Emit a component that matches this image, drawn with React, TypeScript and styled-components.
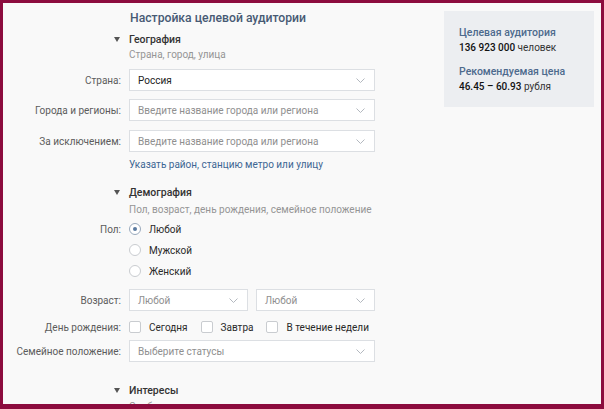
import React from "react";
import styled, { createGlobalStyle } from "styled-components";

const Global = createGlobalStyle`
  html, body { margin: 0; padding: 0; }
  body { font-family: Roboto, "Noto Sans", Arial, sans-serif; background: #8c0c3e; }
  * { box-sizing: border-box; }
`;

const Frame = styled.div`
  width: 604px;
  height: 409px;
  border: 3px solid #8c0c3e;
  border-bottom-width: 5px;
  background: #f9f9f9;
  overflow: hidden;
  display: flex;
  align-items: flex-start;
`;

const Form = styled.div`
  width: 372px;
  display: flex;
  flex-direction: column;
`;

const Title = styled.div`
  padding: 8px 0 0 127px;
  height: 28px;
  font-size: 12.2px;
  line-height: 15px;
  font-weight: 500;
  color: #475a74;
`;

const Row = styled.div<{ $h: number; $mt?: number }>`
  display: grid;
  grid-template-columns: 118px 246px;
  column-gap: 8px;
  align-items: center;
  height: ${(p) => p.$h}px;
  margin-top: ${(p) => p.$mt ?? 0}px;
  white-space: nowrap;
`;

const Label = styled.div`
  text-align: right;
  font-size: 10px;
  color: #5c5c5c;
`;

const Arrow = styled.div`
  display: flex;
  justify-content: flex-end;
  padding-right: 1px;
`;

const SectionTitle = styled.div`
  font-size: 10.5px;
  font-weight: 500;
  color: #333;
`;

const Hint = styled.div`
  font-size: 10px;
  color: #959595;
`;

const LinkText = styled.div`
  font-size: 10px;
  color: #3d6693;
`;

const Box = styled.div<{ $muted?: boolean }>`
  height: 22px;
  background: #fff;
  border: 1px solid #dcdfe3;
  display: flex;
  align-items: center;
  justify-content: space-between;
  padding: 0 9px 0 8px;
  font-size: 10px;
  color: ${(p) => (p.$muted ? "#8f8f8f" : "#222")};
`;

const Pair = styled.div`
  display: grid;
  grid-template-columns: 1fr 1fr;
  column-gap: 8px;
`;

const Choice = styled.div`
  display: flex;
  align-items: center;
  gap: 8px;
  font-size: 10px;
  color: #2a2a2a;
`;

const Radio = styled.span<{ $on?: boolean }>`
  width: 12px;
  height: 12px;
  border-radius: 50%;
  border: 1px solid ${(p) => (p.$on ? "#9aaabd" : "#c9ccd0")};
  background: #fff;
  display: inline-flex;
  align-items: center;
  justify-content: center;
  &::after {
    content: "";
    width: 4px;
    height: 4px;
    border-radius: 50%;
    background: ${(p) => (p.$on ? "#5a7aa0" : "transparent")};
  }
`;

const Checks = styled.div`
  display: flex;
  align-items: center;
  gap: 13px;
`;

const Check = styled.span`
  width: 12px;
  height: 12px;
  border: 1px solid #c9ccd0;
  background: #fff;
  border-radius: 2px;
  display: inline-block;
`;

const Panel = styled.div`
  margin: 8px 0 0 69px;
  width: 150px;
  height: 96px;
  background: #eceef1;
  padding: 14px 0 0 15px;
  display: flex;
  flex-direction: column;
`;

const PanelTitle = styled.div`
  font-size: 10.5px;
  font-weight: 500;
  color: #4d6a8d;
  line-height: 15px;
  height: 15px;
`;

const PanelValue = styled.div`
  font-size: 10px;
  color: #333;
  line-height: 14px;
  height: 14px;
  margin: 1px 0 9px;
  b { font-weight: 500; color: #111; }
`;

const Chevron = () => (
  <svg width="9" height="5" viewBox="0 0 9 5">
    <path d="M0.5 0.5l4 4 4-4" fill="none" stroke="#b3b8bf" strokeWidth="1" />
  </svg>
);

const Triangle = () => (
  <svg width="6" height="5" viewBox="0 0 6 5">
    <path d="M0 0h6L3 5z" fill="#555" />
  </svg>
);

const Select: React.FC<{ text: string; muted?: boolean }> = ({ text, muted }) => (
  <Box $muted={muted}>
    <span>{text}</span>
    <Chevron />
  </Box>
);

export default function App() {
  return (
    <>
      <Global />
      <Frame>
        <Form>
          <Title>Настройка целевой аудитории</Title>
          <Row $h={16}>
            <Arrow><Triangle /></Arrow>
            <SectionTitle>География</SectionTitle>
          </Row>
          <Row $h={14}>
            <span />
            <Hint>Страна, город, улица</Hint>
          </Row>
          <Row $h={22} $mt={8}>
            <Label>Страна:</Label>
            <Select text="Россия" />
          </Row>
          <Row $h={22} $mt={8}>
            <Label>Города и регионы:</Label>
            <Select text="Введите название города или региона" muted />
          </Row>
          <Row $h={22} $mt={9}>
            <Label>За исключением:</Label>
            <Select text="Введите название города или региона" muted />
          </Row>
          <Row $h={14} $mt={5}>
            <span />
            <LinkText>Указать район, станцию метро или улицу</LinkText>
          </Row>
          <Row $h={16} $mt={13}>
            <Arrow><Triangle /></Arrow>
            <SectionTitle>Демография</SectionTitle>
          </Row>
          <Row $h={14} $mt={2}>
            <span />
            <Hint>Пол, возраст, день рождения, семейное положение</Hint>
          </Row>
          <Row $h={14} $mt={6}>
            <Label>Пол:</Label>
            <Choice>
              <Radio $on />
              Любой
            </Choice>
          </Row>
          <Row $h={14} $mt={7}>
            <span />
            <Choice>
              <Radio />
              Мужской
            </Choice>
          </Row>
          <Row $h={14} $mt={7}>
            <span />
            <Choice>
              <Radio />
              Женский
            </Choice>
          </Row>
          <Row $h={22} $mt={11}>
            <Label>Возраст:</Label>
            <Pair>
              <Select text="Любой" muted />
              <Select text="Любой" muted />
            </Pair>
          </Row>
          <Row $h={14} $mt={9}>
            <Label>День рождения:</Label>
            <Checks>
              <Choice>
                <Check />
                Сегодня
              </Choice>
              <Choice>
                <Check />
                Завтра
              </Choice>
              <Choice>
                <Check />
                В течение недели
              </Choice>
            </Checks>
          </Row>
          <Row $h={22} $mt={6}>
            <Label>Семейное положение:</Label>
            <Select text="Выберите статусы" muted />
          </Row>
          <Row $h={16} $mt={20}>
            <Arrow><Triangle /></Arrow>
            <SectionTitle>Интересы</SectionTitle>
          </Row>
          <Row $h={14} $mt={1}>
            <span />
            <Hint>Сообщества, приложения, мировоззрение</Hint>
          </Row>
        </Form>
        <Panel>
          <PanelTitle>Целевая аудитория</PanelTitle>
          <PanelValue>
            <b>136 923 000</b> человек
          </PanelValue>
          <PanelTitle>Рекомендуемая цена</PanelTitle>
          <PanelValue>
            <b>46.45 – 60.93</b> рубля
          </PanelValue>
        </Panel>
      </Frame>
    </>
  );
}
